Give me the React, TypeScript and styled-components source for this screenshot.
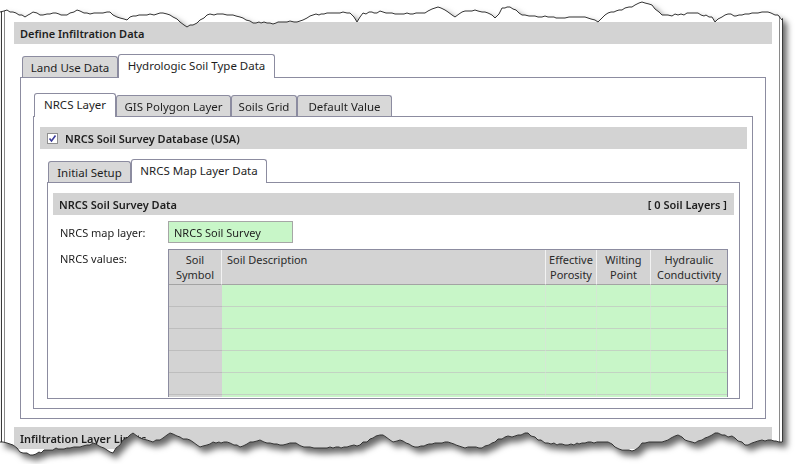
import React from 'react';
import styled, { createGlobalStyle } from 'styled-components';

const GlobalStyle = createGlobalStyle`
  html, body {
    margin: 0;
    padding: 0;
    background: #fff;
  }
  body {
    font-family: 'Noto Sans', 'Liberation Sans', sans-serif;
    font-size: 11px;
    color: #1e1e1e;
  }
  * {
    box-sizing: border-box;
  }
`;

const LINE = '#8c8ca0';
const BAR = '#d3d3d3';
const GREEN = '#c8f6c8';

// torn paper outline, page coordinates
const TOP: [number, number][] = [
  [0, 12], [7, 10], [13, 12], [25, 17], [33, 12], [40, 15], [53, 13], [67, 15], [77, 10], [87, 13],
  [100, 13], [110, 12], [120, 18], [127, 20], [133, 16], [147, 15], [160, 13], [170, 15], [180, 22],
  [187, 27], [193, 25], [200, 20], [207, 15], [220, 14], [233, 15], [243, 18], [253, 23], [267, 23],
  [287, 22], [300, 21], [313, 15], [327, 13], [343, 12], [350, 13], [357, 22], [363, 13], [383, 12],
  [395, 14], [422, 13], [438, 7], [448, 12], [455, 17], [462, 12], [475, 10], [488, 13], [495, 18],
  [502, 8], [510, 7], [522, 15], [535, 16], [548, 17], [562, 18], [575, 17], [588, 18], [598, 22],
  [608, 13], [622, 10], [635, 5], [642, 2], [652, 5], [662, 15], [678, 15], [695, 13], [712, 17],
  [715, 22], [725, 15], [742, 15], [755, 13], [768, 12], [778, 15], [782, 20],
];

const BOTTOM: [number, number][] = [
  [0, 442], [13, 445], [20, 452], [33, 455], [47, 450], [67, 448], [80, 447], [93, 443], [107, 450],
  [113, 453], [123, 440], [130, 435], [133, 433], [140, 438], [153, 442], [163, 438], [170, 433],
  [180, 437], [193, 442], [200, 447], [213, 442], [227, 442], [240, 447], [253, 442], [260, 440],
  [267, 443], [280, 445], [293, 443], [307, 447], [320, 448], [333, 448], [347, 447], [360, 445],
  [373, 438], [383, 435], [393, 442], [400, 440], [415, 447], [435, 443], [448, 442], [462, 447],
  [482, 448], [495, 442], [505, 437], [518, 435], [528, 433], [538, 440], [548, 443], [568, 445],
  [588, 442], [608, 442], [615, 447], [622, 450], [635, 450], [642, 443], [655, 442], [668, 440],
  [678, 435], [685, 440], [695, 443], [705, 438], [715, 433], [725, 435], [735, 438], [745, 445],
  [755, 442], [768, 440], [782, 442],
];

function roughen(pts: [number, number][], seed: number): [number, number][] {
  const out: [number, number][] = [];
  for (let i = 0; i < pts.length - 1; i++) {
    const [x0, y0] = pts[i];
    const [x1, y1] = pts[i + 1];
    const steps = Math.max(1, Math.round((x1 - x0) / 3));
    for (let s = 0; s < steps; s++) {
      const t = s / steps;
      const x = x0 + (x1 - x0) * t;
      const n = Math.sin((x + seed) * 12.9898) * 43758.5453;
      const j = s === 0 ? 0 : (n - Math.floor(n) - 0.5) * 1.8;
      out.push([Math.round(x), Math.round(y0 + (y1 - y0) * t + j)]);
    }
  }
  out.push(pts[pts.length - 1]);
  return out;
}

const topEdge = roughen(TOP, 3);
const bottomEdge = roughen(BOTTOM, 11);

const toPoints = (pts: [number, number][]) => pts.map(([x, y]) => `${x},${y}`).join(' ');

// clip polygon in paper coordinates (paper starts at page x = 1)
const clipPolygon = (() => {
  const fix = (x: number) => (x <= 0 ? -3 : x >= 782 ? 785 : x) - 1;
  const top = topEdge.map(([x, y]) => `${fix(x)}px ${y}px`);
  const bottom = [...bottomEdge].reverse().map(([x, y]) => `${fix(x)}px ${y}px`);
  return `polygon(${[...top, ...bottom].join(', ')})`;
})();

const Sheet = styled.div`
  position: relative;
  width: 784px;
  height: 464px;
  filter: drop-shadow(4px 5px 3px rgba(0, 0, 0, 0.6));
`;

const Paper = styled.div`
  margin-left: 1px;
  width: 782px;
  height: 464px;
  background: #fff;
  border-left: 1px solid #3a3a3a;
  border-right: 1px solid #3a3a3a;
`;

const Frame = styled.div`
  margin: 0 2px;
  height: 100%;
  border-left: 1px solid #8a8a8a;
  border-right: 1px solid #8a8a8a;
  padding-top: 22px;
`;

const Edges = styled.svg`
  position: absolute;
  left: 0;
  top: 0;
  pointer-events: none;
`;

const Bar = styled.div<{ $mx?: string }>`
  height: 22px;
  margin: ${p => p.$mx ?? '0'};
  background: ${BAR};
  display: flex;
  align-items: center;
  justify-content: space-between;
  padding: 0 7px 0 6px;
  font-weight: 600;
  white-space: nowrap;
`;

const TabControl = styled.div<{ $m: string }>`
  margin: ${p => p.$m};
`;

const TabStrip = styled.div<{ $offset: number }>`
  display: flex;
  align-items: flex-end;
  height: 23px;
  padding-left: ${p => p.$offset}px;
`;

const Tab = styled.div<{ $active?: boolean; $w: number }>`
  position: relative;
  z-index: ${p => (p.$active ? 1 : 0)};
  width: ${p => p.$w}px;
  height: ${p => (p.$active ? 24 : 21)}px;
  margin-bottom: ${p => (p.$active ? -1 : 0)}px;
  border: 1px solid ${LINE};
  border-bottom: none;
  border-radius: 3px 3px 0 0;
  background: ${p => (p.$active ? '#fff' : '#d8d8d8')};
  display: flex;
  align-items: center;
  justify-content: center;
  padding-bottom: ${p => (p.$active ? 2 : 0)}px;
  font-size: 11.5px;
  white-space: nowrap;
`;

const TabPanel = styled.div<{ $p: string }>`
  border: 1px solid ${LINE};
  background: #fff;
  padding: ${p => p.$p};
`;

const CheckRow = styled.div`
  height: 22px;
  background: ${BAR};
  display: flex;
  align-items: center;
  gap: 7px;
  padding-left: 7px;
  font-weight: 600;
`;

const Box = styled.span`
  width: 11px;
  height: 11px;
  border: 1px solid #8f8f8f;
  background: #fff;
  display: flex;
  align-items: center;
  justify-content: center;
`;

const Form = styled.div`
  display: grid;
  grid-template-columns: 108px auto;
  row-gap: 6px;
  margin-top: 6px;
  padding-left: 7px;
`;

const Label = styled.div<{ $top?: boolean }>`
  display: flex;
  align-items: ${p => (p.$top ? 'flex-start' : 'center')};
  padding-top: ${p => (p.$top ? 2 : 0)}px;
`;

const Input = styled.div`
  width: 125px;
  height: 22px;
  background: ${GREEN};
  border: 1px solid #a6a6a6;
  display: flex;
  align-items: center;
  padding-left: 5px;
`;

const Grid = styled.div`
  width: 560px;
  height: 148px;
  overflow: hidden;
  border: 1px solid ${LINE};
  border-bottom: none;
  display: grid;
  grid-template-columns: 53px 324px 51px 54px 76px;
  grid-template-rows: 35px;
  grid-auto-rows: 22px;
`;

const Head = styled.div<{ $left?: boolean; $last?: boolean }>`
  background: ${BAR};
  border-right: ${p => (p.$last ? 'none' : '1px solid #f2f2f2')};
  border-bottom: 1px solid #a3a3a3;
  text-align: ${p => (p.$left ? 'left' : 'center')};
  padding: 2px ${p => (p.$left ? 5 : 2)}px 0;
  line-height: 15px;
  color: #2a2a2a;
`;

const Cell = styled.div<{ $key?: boolean; $last?: boolean }>`
  background: ${p => (p.$key ? BAR : GREEN)};
  border-bottom: 1px solid ${p => (p.$key ? '#bdbdbd' : '#c3d3c3')};
  border-right: ${p => (p.$last || p.$key ? 'none' : '1px solid #d4e8d4')};
`;

const columns = [
  { title: 'Soil\nSymbol' },
  { title: 'Soil Description', left: true },
  { title: 'Effective\nPorosity' },
  { title: 'Wilting\nPoint' },
  { title: 'Hydraulic\nConductivity' },
];

function Check() {
  return (
    <svg width="9" height="9" viewBox="0 0 9 9">
      <path d="M1.5 4.5 L3.5 7 L7.5 1.5" fill="none" stroke="#3b3b9a" strokeWidth="1.6" />
    </svg>
  );
}

function SoilGrid() {
  return (
    <Grid>
      {columns.map((c, i) => (
        <Head key={c.title} $left={c.left} $last={i === columns.length - 1}>
          {c.title.split('\n').map(l => (
            <div key={l}>{l}</div>
          ))}
        </Head>
      ))}
      {Array.from({ length: 6 }).map((_, r) =>
        columns.map((c, i) => (
          <Cell key={`${r}-${i}`} $key={i === 0} $last={i === columns.length - 1} />
        )),
      )}
    </Grid>
  );
}

export default function App() {
  return (
    <>
      <GlobalStyle />
      <Sheet>
        <Paper style={{ clipPath: clipPolygon }}>
          <Frame>
            <Bar $mx="0 7px 0 9px">Define Infiltration Data</Bar>

            <TabControl $m="10px 13px 0 15px">
              <TabStrip $offset={2}>
                <Tab $w={96}>Land Use Data</Tab>
                <Tab $w={157} $active>Hydrologic Soil Type Data</Tab>
              </TabStrip>
              <TabPanel $p="15px 12px 9px">
                <TabStrip $offset={1}>
                  <Tab $w={82} $active>NRCS Layer</Tab>
                  <Tab $w={115}>GIS Polygon Layer</Tab>
                  <Tab $w={66}>Soils Grid</Tab>
                  <Tab $w={95}>Default Value</Tab>
                </TabStrip>
                <TabPanel $p="10px 5px 9px 6px">
                  <CheckRow>
                    <Box>
                      <Check />
                    </Box>
                    NRCS Soil Survey Database (USA)
                  </CheckRow>

                  <TabControl $m="10px 7px 0 7px">
                    <TabStrip $offset={1}>
                      <Tab $w={83}>Initial Setup</Tab>
                      <Tab $w={136} $active>NRCS Map Layer Data</Tab>
                    </TabStrip>
                    <TabPanel $p="10px 5px 1px">
                      <Bar>
                        <span>NRCS Soil Survey Data</span>
                        <span>[ 0 Soil Layers ]</span>
                      </Bar>
                      <Form>
                        <Label>NRCS map layer:</Label>
                        <Input>NRCS Soil Survey</Input>
                        <Label $top>NRCS values:</Label>
                        <SoilGrid />
                      </Form>
                    </TabPanel>
                  </TabControl>
                </TabPanel>
              </TabPanel>
            </TabControl>

            <Bar $mx="8px 7px 0 9px">Infiltration Layer Limits</Bar>
          </Frame>
        </Paper>
        <Edges width="784" height="464">
          <polyline points={toPoints(topEdge)} fill="none" stroke="#333" strokeWidth="1" />
          <polyline points={toPoints(bottomEdge)} fill="none" stroke="#333" strokeWidth="1" />
        </Edges>
      </Sheet>
    </>
  );
}
